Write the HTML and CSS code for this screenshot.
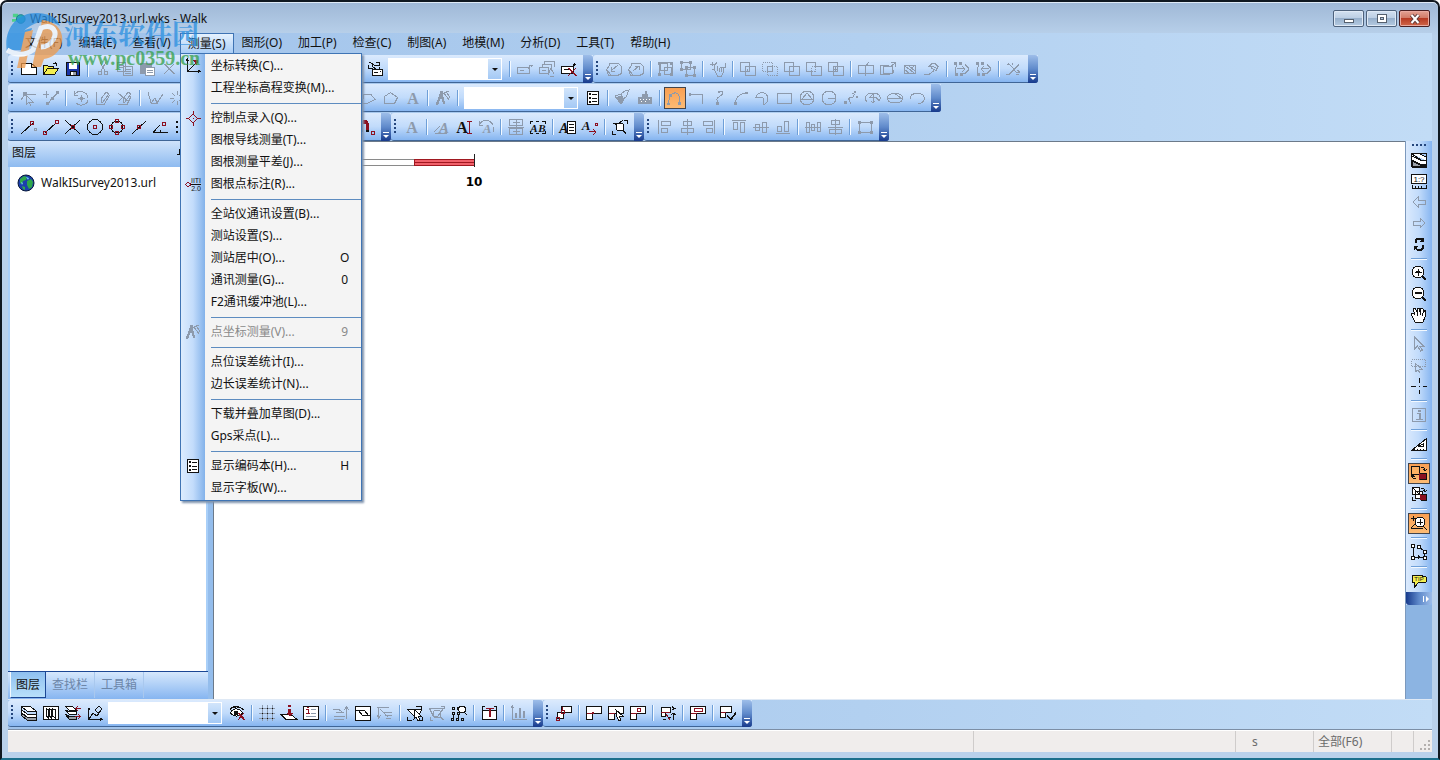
FILE: index.html
```html
<!DOCTYPE html>
<html lang="zh-CN">
<head>
<meta charset="utf-8">
<title>WalkISurvey2013.url.wks - Walk</title>
<link rel="stylesheet" href="styles.css">
</head>
<body>
<div class="window">
  <header class="titlebar">
    <svg class="app-icon" viewBox="0 0 16 16" aria-hidden="true"><path d="M1 2h6v4H1zM0 8h5v3H0z" fill="#4fd08a"/><circle cx="10" cy="8" r="5" fill="#27a9b8" stroke="#157987"/></svg>
    <h1 class="title">WalkISurvey2013.url.wks - Walk</h1>
    <div class="caption-buttons">
      <button class="cap" aria-label="最小化"><svg viewBox="0 0 16 12"><rect x="3.5" y="6.5" width="9" height="3" fill="#fff" stroke="#55606e"/></svg></button>
      <button class="cap" aria-label="最大化"><svg viewBox="0 0 16 12"><rect x="3.5" y="1.5" width="9" height="8" fill="#fff" stroke="#55606e"/><rect x="6.500" y="4.500" width="3" height="2" fill="#b5c8de" stroke="#55606e"/></svg></button>
      <button class="cap close" aria-label="关闭"><svg viewBox="0 0 16 12"><path d="M4.500 2l7 8M11.500 2l-7 8" stroke="#5b3a3a" stroke-width="4"/><path d="M4.500 2l7 8M11.500 2l-7 8" stroke="#fff" stroke-width="2"/></svg></button>
    </div>
  </header>

  <nav class="menubar">
    <button>文件(F)</button><button>编辑(E)</button><button>查看(V)</button>
    <div class="menu-host">
      <button class="open" aria-haspopup="menu" aria-expanded="true">测量(S)</button>
      <div class="popup" role="menu">
        <button role="menuitem"><i data-icon="axes"></i><span>坐标转换(C)...</span></button>
        <button role="menuitem"><i></i><span>工程坐标高程变换(M)...</span></button>
        <hr>
        <button role="menuitem"><i data-icon="ctrlpt"></i><span>控制点录入(Q)...</span></button>
        <button role="menuitem"><i></i><span>图根导线测量(T)...</span></button>
        <button role="menuitem"><i></i><span>图根测量平差(J)...</span></button>
        <button role="menuitem"><i data-icon="ptlabel"></i><span>图根点标注(R)...</span></button>
        <hr>
        <button role="menuitem"><i></i><span>全站仪通讯设置(B)...</span></button>
        <button role="menuitem"><i></i><span>测站设置(S)...</span></button>
        <button role="menuitem"><i></i><span>测站居中(O)...</span><kbd>O</kbd></button>
        <button role="menuitem"><i></i><span>通讯测量(G)...</span><kbd>0</kbd></button>
        <button role="menuitem"><i></i><span>F2通讯缓冲池(L)...</span></button>
        <hr>
        <button role="menuitem" disabled><i data-icon="compass"></i><span>点坐标测量(V)...</span><kbd>9</kbd></button>
        <hr>
        <button role="menuitem"><i></i><span>点位误差统计(I)...</span></button>
        <button role="menuitem"><i></i><span>边长误差统计(N)...</span></button>
        <hr>
        <button role="menuitem"><i></i><span>下载并叠加草图(D)...</span></button>
        <button role="menuitem"><i></i><span>Gps采点(L)...</span></button>
        <hr>
        <button role="menuitem"><i data-icon="codebook"></i><span>显示编码本(H)...</span><kbd>H</kbd></button>
        <button role="menuitem"><i></i><span>显示字板(W)...</span></button>
      </div>
    </div>
    <button>图形(O)</button><button>加工(P)</button><button>检查(C)</button><button>制图(A)</button><button>地模(M)</button><button>分析(D)</button><button>工具(T)</button><button>帮助(H)</button>
  </nav>

  <div class="toolrow">
    <div class="toolbar" data-items="new open save | cut copy paste delete | copy paste copy paste copy paste copy paste keys combo | tag tags tagdel"></div>
    <div class="toolbar" data-items="boxleft boxright | group ungroup | hands | union minus inter merge xor | split rotrect hatch hook | ptsright ptsleft | trim"></div>
  </div>
  <div class="toolrow">
    <div class="toolbar" data-items="nodesel nodeadd | rotate pen pencut | wave burst copy paste copy | paste copy paste | copy flag house textA | compass | combo codebook | brush building | arcpoly* corner scurve arc pie rect circtri circrad sdots ellarc ellipse earc"></div>
  </div>
  <div class="toolrow last">
    <div class="toolbar" data-items="snapend segment crossing center quadrant nearest angle dots copy paste | copy paste copy paste copy magnet"></div>
    <div class="toolbar" data-items="textA | texthand textsize textrot | textgrid textbox | textlist textarrow | textfind"></div>
    <div class="toolbar" data-items="alignl alignc alignr | alignt alignm alignb | disth distv | frame"></div>
  </div>

  <main class="work">
    <aside class="dock">
      <h2 class="dock-title"><span>图层</span><svg viewBox="0 0 10 10" aria-hidden="true"><path d="M3.500 1v5M6.500 1v5M1 6.500h8M5.500 7v3M3 1.500h4" fill="none" stroke="#111"/></svg></h2>
      <ul class="tree">
        <li><svg viewBox="0 0 18 18" aria-hidden="true"><circle cx="9" cy="9" r="8" fill="#1c3fae" stroke="#061838"/><path d="M3 5l4-3 3 1-1 3-3 1-1 3-2-1zM10 7l4-2 2 3-1 5-3 2-2-4zM5 12l3 1v3l-2-1z" fill="#2fa84a"/><path d="M9 3l3 1-1 2zM4 8l2 1-1 2z" fill="#6fd3ee"/></svg><span>WalkISurvey2013.url</span></li>
      </ul>
      <div class="tabs">
        <button class="on">图层</button><button>查找栏</button><button>工具箱</button>
      </div>
    </aside>
    <section class="canvas" aria-label="绘图区">
      <svg class="scale" width="300" height="50" shape-rendering="crispEdges" aria-label="比例尺">
        <path d="M20 17.500h180M20 23.500h180" stroke="#8a8a8a"/>
        <rect x="200" y="17" width="60" height="7" fill="#f0606a"/>
        <path d="M200 17.500h60M200 20.500h60M200 23.500h60M200.500 17v7" stroke="#a01820"/>
        <path d="M260.500 12v13" stroke="#222"/>
        <text x="260" y="44" text-anchor="middle">10</text>
      </svg>
    </section>
    <div class="side">
      <div class="vbar" data-items="layers scale1 prev next refresh | zoomin zoomout pan | pointer boxsel crosshair | info | setsquare | swap* swap2 | zoomcalc* | editpath | tip"></div>
    </div>
  </main>

  <div class="toolrow bottom">
    <div class="toolbar" data-items="stack pages stackx plot combo eyex | grid pin report | lift sheet drop | selpoly zoompoly tree | box3 | chart"></div>
    <div class="toolbar" data-items="link1 | link2 link3 link4 | link5 | link6 | link7"></div>
  </div>

  <footer class="status">
    <span class="p-msg"></span><span class="p-pos"></span><span class="p-unit">s</span><span class="p-all">全部(F6)</span><span class="p-flag"></span>
    <span class="p-grip"><svg width="12" height="12" fill="#b4b0ae" aria-hidden="true"><path d="M9 1h2v2H9zM9 5h2v2H9zM5 5h2v2H5zM9 9h2v2H9zM5 9h2v2H5zM1 9h2v2H1z"/></svg></span>
  </footer>

  <div class="watermark" aria-hidden="true">
    <svg viewBox="0 0 60 60">
      <path d="M3 42C-1 20 12 2 34 3c14 1 20 6 22 13C42 8 27 12 17 24c-5 7-7 12-9 18z" fill="#2a8fe0"/>
      <path d="M3 38c6-12 14-18 25-20l-5 22H4z" fill="#2a8fe0"/>
      <path d="M38 10c18 2 24 16 18 28-3 6-9 10-16 11l-3 8h-9l8-36z" fill="#f09a4a"/>
      <path d="M21 22l8-2-8 38h-8z" fill="#f09a4a"/>
      <path d="M3 40c10 6 19 5 26 0l8-22c12-5 17 4 12 12-3 5-7 7-12 7" fill="none" stroke="#fff" stroke-width="5"/>
    </svg>
    <div class="wm-text"><strong>河东软件园</strong><em>www.pc0359.cn</em></div>
  </div>
</div>
<script src="toolbars.js"></script>
</body>
</html>
```
FILE: styles.css
```css
* { box-sizing: border-box; }
body {
  margin: 0;
  font: 12px/16px "Noto Sans", "Noto Sans CJK SC", sans-serif;
  color: #111;
}
button { font: inherit; color: inherit; border: 0; background: none; padding: 0; margin: 0; }
h1, h2, ul { margin: 0; padding: 0; font: inherit; list-style: none; }

.window {
  position: relative;
  display: flex;
  flex-direction: column;
  height: 100vh;
  padding: 0 6px 6px;
  border: 2px solid #101820;
  border-bottom-color: #1b6f8c;
  border-radius: 7px 7px 0 0;
  background: linear-gradient(#9fb8d6, #b9d1eb 34px, #b9d1eb);
  box-shadow: inset 0 1px 0 #dfeaf6;
}

/* Title bar */
.titlebar { display: flex; align-items: center; height: 31px; padding: 2px 0 0 4px; }
.app-icon { width: 14px; height: 14px; margin-right: 4px; }
.title { flex: 1; }
.caption-buttons { display: flex; gap: 2px; padding-right: 2px; }
.cap {
  display: grid;
  place-items: center;
  width: 31px;
  height: 17px;
  border: 1px solid #4e627c;
  border-radius: 2px;
  background: linear-gradient(#d3e1f0, #bacde3 50%, #97b0cc 50%, #b5cbe2);
  box-shadow: inset 0 0 0 1px #dfe9f5;
}
.cap svg { width: 16px; height: 12px; }
.cap.close { border-color: #4a1f22; background: linear-gradient(#e3a294, #d07763 50%, #b73b24 50%, #d0674a); box-shadow: inset 0 0 0 1px #e9aaa0; }

/* Menu bar */
.menubar { display: flex; height: 22px; padding-left: 9px; background: linear-gradient(90deg, #a0c2ea, #b2d0f0 60%, #c2dcf6); }
.menubar > button, .menu-host > button { height: 20px; padding: 0 8px; }
.menu-host { position: relative; }
.menu-host > .open { margin-left: 1px; padding: 0 7px; border: 1px solid #3f74b4; border-bottom: 0; background: linear-gradient(#e6f2fe, #a9cdf6); }
.popup {
  position: absolute;
  z-index: 5;
  left: 1px;
  top: 20px;
  width: 182px;
  padding: 1px 0;
  border: 1px solid #3f74b4;
  background: linear-gradient(90deg, #dcecfe, #c3dcfb 12px, #83b2ea 24px, #f4f4f4 24px);
  box-shadow: 2px 2px 2px #7f93ad;
}
.popup button { display: flex; align-items: center; width: 100%; height: 22px; text-align: left; white-space: nowrap; }
.popup i { display: grid; place-items: center; width: 24px; margin-right: 6px; }
.popup span { flex: 1; }
.popup kbd { width: 24px; font: inherit; margin-right: 4px; text-align: center; }
.popup button:disabled { color: #8a8a8a; }
.popup hr { margin: 4px 0 3px 30px; border: 0; border-top: 1px solid #5d8cc0; }

/* Toolbars */
.toolrow { display: flex; height: 29px; padding-bottom: 1px; background: linear-gradient(90deg, #a0c2ea, #b2d0f0 60%, #c2dcf6); }
.toolrow.last { height: 28px; padding-bottom: 0; }
.toolbar {
  display: flex;
  align-items: flex-start;
  height: 28px;
  padding-top: 3px;
  border-bottom: 1px solid #3f6596;
  border-radius: 3px 0 3px 3px;
  background: linear-gradient(#dbeafd, #c1dbfb 50%, #86b5f0);
}
.grip { width: 10px; height: 16px; margin-top: 3px; background: repeating-linear-gradient(#24457c 0 2px, transparent 2px 4px) 3px 0 / 2px 14px no-repeat; }
.tool { display: grid; place-items: center; width: 22px; height: 22px; }
.tool svg, .popup svg { width: 16px; height: 16px; overflow: visible; shape-rendering: crispEdges; }
.tool.on { border: 1px solid #41454d; background: linear-gradient(#f99f52, #fcbb74); }
.sep { width: 8px; height: 16px; margin-top: 3px; background: linear-gradient(90deg, transparent 3px, #6e9fd8 3px, #6e9fd8 4px, #f3f9ff 4px, #f3f9ff 5px, transparent 5px); }
.more {
  display: grid;
  place-items: end center;
  align-self: stretch;
  width: 10px;
  margin: -3px 0 -1px 3px;
  padding-bottom: 2px;
  border-radius: 0 3px 3px 0;
  background: linear-gradient(#9dbde9, #5f8acb 50%, #173a8c);
}
.more svg { width: 8px; height: 8px; }
.combo { position: relative; width: 114px; height: 22px; margin: 0 4px 0 2px; }
.combo select { appearance: none; display: block; width: 100%; height: 100%; border: 1px solid #fff; border-radius: 0; background: linear-gradient(#d2e5fb, #a4c9f5) right / 13px 100% no-repeat #fff; }
.combo::after { content: ""; position: absolute; right: 4px; top: 10px; border: 3px solid transparent; border-top-color: #111; border-bottom: 0; }

/* Work area */
.work { flex: 1; display: flex; min-height: 0; background: #94bdec; }
.dock { display: flex; flex-direction: column; width: 200px; background: #a9cff8; }
.dock-title { display: flex; justify-content: space-between; height: 26px; padding: 4px 22px 4px 4px; background: linear-gradient(#cfe3fb, #8ebbf0); }
.dock-title svg { width: 10px; height: 10px; margin-top: 3px; }
.tree { flex: 1; margin: 0 2px; padding-top: 6px; background: #fff; }
.tree li { display: flex; align-items: center; gap: 6px; height: 20px; padding-left: 7px; }
.tree svg { width: 18px; height: 18px; }
.tabs { display: flex; height: 28px; padding: 0 0 1px 2px; border-top: 1px solid #1c4794; background: linear-gradient(#d6e8fd, #86b5f0); color: #6d86a8; }
.tabs button { padding: 0 6px; border-right: 1px solid #a9c8ee; }
.tabs .on { color: #111; border: 1px solid #1c4794; border-top: 0; border-left-color: #f3f9ff; padding: 0 5px; background: linear-gradient(#8fc0f0, #b8e0fa); }
.canvas { position: relative; flex: 1; margin-left: 5px; border: 1px solid #6c7a8a; border-width: 1px 0 0 1px; background: #fff; }
.scale { position: absolute; left: 0; top: 0; font: bold 12px "DejaVu Sans", sans-serif; }
.side { width: 27px; border-left: 1px solid #7c99bd; background: #8cb4e2; }
.vbar { display: flex; flex-direction: column; align-items: center; background: linear-gradient(90deg, #dbeafd, #c1dbfb 50%, #86b5f0); }
.vbar .grip { width: 16px; height: 9px; margin: 0; background: repeating-linear-gradient(90deg, #24457c 0 2px, transparent 2px 4px) 1px 3px / 14px 2px no-repeat; }
.vbar .tool { height: 21px; align-items: start; padding-top: 2px; }
.vbar .tool.on { padding-top: 1px; }
.vbar .sep { width: 16px; height: 8px; margin: 0; background: linear-gradient(transparent 3px, #6e9fd8 3px, #6e9fd8 4px, #f3f9ff 4px, #f3f9ff 5px, transparent 5px); }
.vbar .more { height: 13px; width: auto; margin: 0; padding: 0 2px 0 0; place-items: center end; border-radius: 0 0 3px 3px; background: linear-gradient(90deg, #173a8c, #5f8acb 50%, #9dbde9); }
.vbar .more svg { transform: rotate(-90deg); }

.bottom { height: 31px; padding-bottom: 2px; border-top: 1px solid #dfe9f5; border-bottom: 1px solid #7c8ea5; }
.bottom .toolbar { height: 27px; padding-top: 2px; }
.bottom .more { margin-top: -2px; }

/* Status bar */
.status { display: flex; height: 22px; border-top: 1px solid #fff; background: #f0edec; color: #6b6b6b; line-height: 21px; }
.status span { border-left: 1px solid #cfcccb; }
.status .p-msg { flex: 1; border: 0; }
.p-pos { width: 262px; }
.p-unit { width: 78px; padding-left: 16px; }
.p-all { width: 78px; padding-left: 4px; }
.p-flag { width: 22px; }
.status .p-grip { display: grid; place-items: end; width: 19px; padding: 1px; }

/* Watermark */
.watermark { position: absolute; z-index: 6; left: 2px; top: 6px; display: flex; opacity: .75; pointer-events: none; }
.watermark svg { width: 60px; height: 64px; }
.wm-text { display: flex; flex-direction: column; padding-top: 10px; }
.wm-text strong { font: bold 27px/30px "Noto Serif CJK SC", "Noto Sans CJK SC", sans-serif; color: #2a8fe0; }
.wm-text em { font: bold 20px/20px "Liberation Serif", serif; color: #35a04a; padding-left: 4px; }
```
FILE: toolbars.js
```javascript
// Pen styles, keyed by the first character of each icon layer.
const pens = {
  k: 'fill="none" stroke="#111"',
  K: 'fill="#111"',
  w: 'fill="#fff" stroke="#111"',
  g: 'fill="none" stroke="#8d9aac"',
  G: 'fill="#8d9aac"',
  d: 'fill="none" stroke="#8d9aac" stroke-dasharray="1 1"',
  r: 'fill="none" stroke="#8c1020"',
  R: 'fill="#8c1020"',
  y: 'fill="#f4ee50" stroke="#111"',
  b: 'fill="#1b35a8" stroke="#111"',
  s: 'fill="#9aa0a8" stroke="#111"',
  o: 'fill="#fcb064" stroke="#111"',
  W: 'fill="#fff"'
};

// Each icon is drawn on a 16 x 16 grid; layers are separated by "/".
// A layer starting with "t" is text: x,y,size,colour,style,characters.
const icons = {
  new: 'wM.5 2.500h10l5 4v7h-15z/kM10.500 2.500v4h5',
  open: 'yM.5 13.500v-9h4l1 1h5v2h5l-4 6z/kM.5 13.500l4-6h11M9.500 2.500h4v2M12 1l2 2',
  save: 'bM1.500 1.500h13v13h-13z/WM4 2h8v6H4z/sM5.500 10.500h6v4h-6z/WM6 11h2v3H6z',
  cut: 'gM5 1l5 9M11 1L6 10/gM3.500 10.500h3v3h-3zM9.500 10.500h3v3h-3z',
  copy: 'gM.5 1.500h8v9h-8zM6.500 5.500h9v9h-9zM2 4.500h5M2 6.500h4M8 8.500h6M8 10.500h6M8 12.500h6',
  paste: 'GM1 2h12v11H1z/WM7 7h8v7H7z/gM6.500 6.500h9v8h-9zM8 9.500h6M8 11.500h6',
  delete: 'gM3 3l10 10M13 3L3 13M4 3l10 10',
  keys: 'kM2.500 1.500l3 1v3l4 3M9 1.500h3v3h-4l-3-2M1.500 4v3h4/wM5.500 8.500h10v6h-10z/kM7 11.500h4M12.500 10.500h1M12 8V6',
  tag: 'gM.5 6.500h12v6h-12zM3 9.500h4M11 8l2-4h3M13 4l2 2',
  tags: 'gM.5 6.500h9v6h-9zM3.500 6V3.500h9V10M5.500 3V.5h10v5M3 9.500h4M9 14l3-7 3 6M11 15h4',
  tagdel: 'wM.5 5.500h12v7h-12z/kM3 8.500h5M12 5V3.500h3M13.500 2v3/rM7 7l8 8M15 7l-8 8M8 7l8 8',
  boxleft: 'gM.5 8.500l3-4v-2h9l3 3v7l-4 2h-9zM.5 8.500l5 6M12 4l-7 6M5 6v4h4',
  boxright: 'gM.5 8.500l3-4v-2h9l3 3v7l-4 2h-9zM.5 8.500l5 6M5 10l6-5M7 5h4v4',
  group: 'gM2.500 2.500h7v7h-7zM6.500 6.500h7v7h-7z/GM0 1h3v3H0zM12 1h3v3h-3zM0 12h3v3H0zM12 12h3v3h-3z/gM3 1.500h9M1.500 4v8M14.500 4v8',
  ungroup: 'gM1.500 1.500h9v7h-9zM6.500 6.500h8v8h-8z/GM0 0h3v3H0zM9 0h3v3H9zM0 7h3v3H0zM5 5h3v3H5zM13 5h3v3h-3zM5 13h3v3H5zM13 13h3v3h-3z',
  hands: 'gM0 3.500h5l2-2M15 2v4h-5M4.500 4v5l3 6h4l2-4V7M7.500 5v5M9.500 7v4M11.500 7v4M2 1v4M4 8l-2 1',
  union: 'gM.5 1.500h9v9h-9zM5.500 5.500h10v9h-10zM7.500 8v3M9 8v3',
  minus: 'gM5.500 5.500h5v5h-5z/dM.5 1.500h10v9h-10zM5.500 5.500h10v9h-10z',
  inter: 'gM.5 1.500h9v9h-9zM5.500 5.500h10v9h-10z',
  merge: 'gM.5 1.500h9v4h6v9h-10v-4h-5z/dM5.500 5.500h4v5h-4z',
  xor: 'gM.5 1.500h9v9h-9zM5.500 5.500h10v9h-10zM7.500 6v4M5 8.500h4',
  split: 'gM.5 4.500h15v8h-15zM11 1L7 6v9',
  rotrect: 'gM.5 13.500v-9h8M3.500 5.500h9v7h-9zM.5 13.500h9M11 1.500h4v4M15 2l-5 4M13 9v3',
  hatch: 'gM2.500 4.500h11v8h-11zM3 5l9 7M7 5l6 5M3 9l4 3M8 9l4-4',
  hook: 'gM0 13.500h5l5-4M3.500 5.500h5l5 2M8 2.500h3l3 3-2 4-4-2-2-3z',
  ptsright: 'gM2 2v4l-1 7M6 2l1 2M11 3.500l3 3v3l-3 3h-4M3 7.500h8M8 5l3 3-3 3/GM0 1h3v3H0zM5 1h3v3H5zM1 12h3v3H1zM6 12h3v3H6z',
  ptsleft: 'gM2 2v4l-1 7M6 2l1 2M11 3.500l3 3v3l-3 3h-4M5 7.500h8M8 5L5 8l3 3/GM0 1h3v3H0zM5 1h3v3H5zM1 12h3v3H1zM6 12h3v3H6z',
  trim: 'gM0 13.500h3l10-10M2 2l5 5 3 4h4M10 13l3 1M1 4l2-1M11 9l3 2M6 2l1 2',

  nodesel: 'gM0 10L4 4h11M5 5v10l3-3 2 4M6 6l6 6H8/GM2 2h4v4H2z',
  nodeadd: 'gM0 4.500h6M3.500 1v7M5 14l4-6 6-5/GM3 12h3v3H3zM8 7h3v3H8zM13 1h3v3h-3z',
  rotate: 'gM1 5c4-6 13-4 14 3s-8 9-12 5M1 1v4h4M5 8.500h7M8.500 5v7M7 7l3 3M10 7l-3 3',
  pen: 'gM1.500 2v12h8l5-9M6 13V9l5-7 3 2-6 8z',
  pencut: 'gM1 14.500h9l4-8M6 13V9l5-7 3 2-6 8zM1 3l11 9M2 11l4-4',
  wave: 'gM1 2l3 11 4-5 2 5 6-9M4 13h7',
  burst: 'gM3 3l3 3M8 1v4M13 3l-3 3M1 8h4M11 8h4M3 13l3-3M8 11v4M13 13l-3-3',
  flag: 'gM1 13.500h5l8-4-4-5H3z',
  house: 'gM1.500 13.500v-7l6-4 7 5-3 6z',
  textA: 't8,14,16,#8d9aac,bold,A',
  compass: 'gM6 2L1 15M6 2l4 12M3 9l6-1M9 3l5 7M11 1l4 7M7 4l7-3/GM5 1h3v4l2 9H8L6 7l-3 8H1l3-8z',
  codebook: 'wM2.500 1.500h11v13h-11z/KM4 3h2v2H4zM4 7h2v2H4zM4 11h2v2H4z/kM7 4.500h5M7 8.500h5M7 11.500h5',
  brush: 'gM0 6l6 8 3-4-3-6zM6 4l4-3 4-1-3 7-4 3/GM2 7l5-2 2 4-3 5z',
  building: 'GM1 7h14v7H1zM5 4h6v3H5zM8 1h2v3H8z/WM3 9h1v1H3zM6 9h1v1H6zM9 9h1v1H9zM12 9h1v1h-1zM4 11h1v1H4zM8 11h1v1H8z',
  arcpoly: 'gM1 14l2-8M5 4c5-3 8 0 8 9/GM2 4h3v3H2zM0 13h3v2H0zM11 12h3v3h-3z',
  corner: 'gM1 4.500h12.500v9/GM0 3h2v3H0z',
  scurve: 'gM8 1.500h3v3l-5 4c-1 3 3 2 0 6/GM5 12h3v3H5zM7 1h2v2H7z',
  arc: 'gM2 14C3 7 6 4 14 3/GM1 12h3v3H1zM12 2h3v2h-3z',
  pie: 'gM8.500 14.500a6 6 0 10-7.500-7h7z',
  rect: 'gM.5 3.500h14v10h-14z',
  circtri: 'gM8 1a7 7 0 100 14A7 7 0 008 1zM1 9.500h14M8 3L3 9h10z',
  circrad: 'gM8 1a7 7 0 100 14A7 7 0 008 1zM7 8.500h8',
  sdots: 'gM9 3.500c4-1 2 4-1 4s-2 4 0 6/GM1 11h3v3H1zM11 1h2v2h-2zM5 8h2v2H5zM13 6h2v2h-2z',
  ellarc: 'gM2 12C-2 7 2 3 8 3s9 4 6 8M8 4L4 8M8 4v9M4 7h7l3 4M6 11l2 2 2-2',
  ellipse: 'gM8 3c-4 0-7.500 2-7.500 5s3 5 7.500 5 7.500-2 7.500-5S12 3 8 3zM1 8.500h14M7 3l7 5',
  earc: 'gM1 9C0 2 15 1 15.500 8c0 3-2 5-6 6',

  snapend: 'kM0 15L12 4/rM9.500 2.500h3v3h-3z/gM13.500 9.500h2v2h-2z',
  segment: 'kM2 14L13 4/rM.5 12.500h3v3h-3zM12.500 1.500h3v3h-3z',
  crossing: 'kM0 1l15 14M15 1L0 15/rM6.500 6.500h3v3h-3z',
  center: 'kM8 .5a7.500 7.500 0 100 15 7.500 7.500 0 000-15z/rM6.500 6.500h3v3h-3z',
  quadrant: 'kM8 2a6 6 0 100 12A6 6 0 008 2z/rM6.500.5h3v3h-3zM6.500 12.500h3v3h-3zM.5 6.500h3v3h-3zM12.500 6.500h3v3h-3z',
  nearest: 'kM1 15L15 2/rM6.500 6.500h3v3h-3z',
  angle: 'kM0 13.500h15M0 13.500L7 6M7.500 11v2/rM9.500 3.500h3v3h-3z',
  dots: 'KM1 2h2v2H1zM1 7h2v2H1zM1 12h2v2H1z',
  magnet: 'RM1 13V5c2-6 9-5 9 1v6H7V7C7 4 4 4 4 6v7z/rM12.500 12.500h3v3h-3z/KM1 11h3v2H1zM7 11h3v2H7z',
  texthand: 't10,14,15,#8d9aac,italic,A/gM0 13l6-6M1 14.500h12',
  textsize: 't6,14,16,#111,bold,A/rM11 2.500h5M11 14.500h5M13.500 3v12',
  textrot: 't9,14,13,#8d9aac,italic,A/gM1 6C4 0 12 0 15 6M1 2v4h4M15 8v5',
  textgrid: 'gM1.500.5h13v6h-13zM1.500 9.500h13v6h-13zM5 3.500h7M5 12.500h7M8 1v14M0 8h16',
  textbox: 't4,13,11,#111,italic,A/t12,13,11,#111,italic,B/kM0 2.500h3M6 2.500h3M12 2.500h4M0 14.500h3M6 14.500h3M12 14.500h4M.5 3v2M15.500 3v2M.5 12v3M15.500 12v3',
  textlist: 't4,14,14,#111,italic,A/wM7.500 2.500h8v12h-8z/kM9 5.500h5M9 8.500h5M9 11.500h5',
  textarrow: 't4,11,13,#111,italic,A/rM7 12.500h6M11 10l3 3-3 3M13.500 4.500h2v2h-2z',
  textfind: 'kM12 1.500h3.500v3M.5 12v3.500h3M3 5h3l5-4/wM8 4a4 4 0 100 8 4 4 0 000-8z/kM11 11l3 4M1 4l4 1',
  alignl: 'gM1.500 1v14M4.500 2.500h9v4h-9zM4.500 9.500h6v4h-6z',
  alignc: 'gM8.500 0v16M2.500 9.500h12v4h-12zM4.500 2.500h8v4h-8z',
  alignr: 'gM13.500 1v14M2.500 2.500h9v4h-9zM5.500 9.500h6v4h-6z',
  alignt: 'gM1 1.500h14M2.500 3.500h4v7h-4zM9.500 3.500h4v10h-4z',
  alignm: 'gM0 8.500h16M2.500 5.500h4v6h-4zM9.500 3.500h4v10h-4z',
  alignb: 'gM1 14.500h14M2.500 7.500h4v5h-4zM9.500 2.500h4v10h-4z',
  disth: 'gM0 8.500h16M1.500 3.500h3v10h-3zM6.500 5.500h3v6h-3zM12.500 3.500h3v9h-3z',
  distv: 'gM8.500 0v16M4.500 1.500h8v4h-8zM2.500 10.500h12v4h-12zM1 8h15',
  frame: 'gM2.500 3.500h12v10h-12z/GM1 2h3v3H1zM13 2h3v3h-3zM1 12h3v3H1zM13 12h3v3h-3z',

  axes: 'kM2.500 1v12.500H15M3 13L12 4M1 3l1.500-2L4 3M13 12l2 1.500L13 15/RM8 2h5l-1 6z',
  ctrlpt: 'rM8 4l4.500 4.500L8 13 3.500 8.500zM8.500 1v3M8.500 13v3M1 8.500h3M13 8.500h3/RM8 8h1v1H8z',
  ptlabel: 'rM3 6l3 2.500L3 11 .5 8.500z/kM6 8.500h10/t11,7,7,#111,normal,IITI/t11,15,7,#111,normal,2.0',

  layers: 'wM.5 1.500h8l7 4v3h-5zM.5 1.500v13h15v-6/sM1 9l8 4h6v2H1z/WM2 5l8 4h5v2H9L2 7z/kM1 4l8 4h7M1 8l8 4h7M.5 1.500h15v13h-15z',
  scale1: 'wM.5 1.500h15v9h-15z/t8,9,8,#111,normal,1:?/kM1 11.500v4h14v-4M4.500 13v2M7.500 13v2M10.500 13v2',
  prev: 'gM2 8l5-5v3h7v4H7v3z',
  next: 'gM14 8L9 3v3H2v4h7v3z',
  refresh: 'kM4.500 7V4l2-2h4l2 2M12.500 9v3l-2 2h-4l-2-2M5.500 7V4.500l2-1.500h3M11.500 9v2.500L10 13H7/KM13 1v5H9zM3 15v-5h4z',
  zoomin: 'wM7 1a6 6 0 100 12A6 6 0 007 1z/kM12 11l3 4M11 12l3 3M4 7.500h7M7.500 4v7M5 6.500h4',
  zoomout: 'wM7 1a6 6 0 100 12A6 6 0 007 1z/kM12 11l3 4M11 12l3 3M4 7.500h7M4 6.500h7',
  pan: 'wM4 15l-3-6-1-2 2-1 2 2-2-6 2-1 2 4V1h2l1 4 1-4 2 1v4l2-3 1 1-1 6-2 5z/kM6 5v4M9 5v3M12 6l-1 3',
  pointer: 'gM3.500 1v12l3-3 3 5 2-1-3-4h4z',
  boxsel: 'gM4 6v9l3-2 2 3M5 7l6 5H8/dM.5 2.500h14v7h-14z',
  crosshair: 'kM8.500 0v5M8.500 12v4M0 8.500h5M12 8.500h4/KM8 8h1v1H8z',
  info: 'gM1.500 1.500h13v13h-13zM6 6.500h3v6M5 12.500h7/GM7 3h3v2H7zM8 7h2v5H8z',
  setsquare: 'wM.5 14.500h15v-12z/kM7.500 10.500h5v-3zM3 13v2M6 13v2M9 13v2M12 13v2',
  swap: 'oM.5 1.500h8v8h-8z/RM8 8h8v7H8z/kM8.500 8.500h7v6h-7M10 2c3 0 4 1 4 4M12 4l2 2 2-2M5 14c-3 0-4-1-4-3M0 12l1-2 3 2',
  swap2: 'wM1.500 1.500h7v7h-7zM4.500 5.500h7v7h-7z/RM9 8h6v6H9z/kM1 1l7 7M9.500 8.500h6v6h-6M10 2c3 0 4 1 4 4M1 11v3h4M12 4l2 2 2-2',
  zoomcalc: 'WM9 2a5 5 0 100 10A5 5 0 009 2z/kM9 2a5 5 0 100 10A5 5 0 009 2zM6 7.500h6M9.500 4v6M12 11l4 4M0 3.500h5M2.500 1v5M0 13.500h12M0 13l4-4',
  editpath: 'kM2 2v11h12M8 3l5 4v6/wM.5.5h3v3h-3zM6.500 1.500h3v3h-3zM12.500 6.500h3v3h-3zM.5 12.500h3v3h-3zM12.500 12.500h3v3h-3z/bM7 11l2 2-2 2z',
  tip: 'yM1 3l7-1 7 2v5l-8 1-4 5V9L1 9z/t8,8,6,#111,normal,TIP',

  stack: 'wM.5 1.500h9l6 5h-9z/kM.5 1.500v3l6 5h9v-3/wM.5 4.500l6 5h9v3h-9l-6-5z/sM.5 8.500l6 4h9v3h-9l-6-5z',
  pages: 'wM.5 1.500h15v13h-15z/kM3.500 4v7l2 2V5zM6.500 4v7l2 2V5zM9.500 4v7l3 2V5z',
  stackx: 'wM.5 1.500h7l4 4h-7z/wM.5 5.500l4 4h7v-3h-7z/sM.5 9.500l4 5h7v-3h-7z/rM11 3.500h5M13 1l-2 2.500L13 6M10 11.500h5M13 9l2 2.500L13 14',
  plot: 'kM1.500 3v11.500H15M1 5l1-2 1 2M13 13l2 1.500-2 1M2 14l4-6 4 3 4-6M8 5l4-4 3 3-4 4z',
  eyex: 'wM1 8c4-6 9-5 13 0-4 4-9 4-13 0z/KM5 6h4v4H5zM1 3c4-3 9-3 14 1l-1 1C9 1 5 2 1 5z/rM9 8l6 7M15 8l-6 7M10 8l6 7',
  grid: 'gM0 3.500h16M0 8.500h16M0 13.500h16M3.500 0v16M8.500 0v16M13.500 0v16/KM3 3h1v1H3zM8 3h1v1H8zM13 3h1v1h-1zM3 8h1v1H3zM8 8h1v1H8zM13 8h1v1h-1zM3 13h1v1H3zM8 13h1v1H8zM13 13h1v1h-1z',
  pin: 'wM0 9.500h10l6 5H5z/RM7 4h3v6H7zM5 8h7l-3 4zM7 0h3v2H7z',
  report: 'wM.5 1.500h15v13h-15z/rM3 4.500h2v4M3 8.500h4/gM8 4.500h5M8 8.500h5M3 11.500h10/RM4 2h2v1H4z',
  lift: 'gM0 4.500h6l4 3H3M1 11.500h11M13.500 14V3M11 5l2.500-3L16 5M1 14.500h10',
  sheet: 'wM.5 1.500h15v14h-15z/kM3.500 5.500h6l4 5h-6zM1 5.500h2M13 10.500h2',
  drop: 'gM0 2.500h12M1.500 3v9M0 10l1.500 3L4 10M3 4l8 8M6 7.500h9M8 10.500h7M9 13.500h5',
  selpoly: 'wM.5 4.500h14l-3 7h-4z/kM9 1.500h6M14.500 1v3M.5 12v3.500h4M11 15.500h4V12/wM8 5l6 6h-3l2 4-2 1-2-4-2 2z',
  zoompoly: 'gM.5 3.500h14l-6 8h-4zM8 5a4 4 0 100 8 4 4 0 000-8zM11 12l4 3M12 1h3v3M1 12v3h3',
  tree: 'kM1.500 2.500h2v2h-2zM6.500 2.500h1v2h-1zM1.500 7.500h2v2h-2zM6.500 7.500h2v2h-2zM.5 13.500h2v2h-2zM5.500 13.500h2v2h-2zM10.500 13.500h2v2h-2zM2.500 10v3M7.500 10v3/wM11 1a3 3 0 100 7 3 3 0 000-7z/kM13 7l3 3',
  box3: 'wM1.500 5.500h14v9h-14z/rM5 3.500h8M8.500 4v8M9.500 4v8/kM1 1.500h3M13 1.500h3M1.500 2v3M15.500 2v3',
  chart: 'gM1.500 1v13.500H16M4.500 13V8M5.500 13V8M8.500 13V3M9.500 13V3M12.500 13V6M13.500 13V6M0 3l1.500-2L3 3',
  link1: 'wM5.500 1.500h10v6h-10zM1.500 7.500h6v6h-6z/rM5.500 5.500h3v3h-3zM.5 12.500h3v3h-3zM6 2v4',
  link2: 'wM.5 1.500h15v7h-15zM.5 8.500h6v6h-6z/rM1 8.500h6/RM6 7h2v2H6z',
  link3: 'wM.5 1.500h15v7h-15zM.5 8.500h6v6h-6z/rM1 8.500h6/wM8 5l7 6h-4l2 4-2 1-2-4z',
  link4: 'wM.5 1.500h15v7h-15zM.5 8.500h6v6h-6z/rM7.500 3.500h3v3h-3zM1 8.500h6',
  link5: 'wM1.500 2.500h9v5h-9zM1.500 7.500h4v4h-4z/rM1 7.500h9M6 9l4 6/kM13 8v7M11 10l2-2 3 2M12 1l2 3M16 3l-4 2M3 14h3M8 12h3',
  link6: 'wM.5 1.500h15v7h-15zM.5 8.500h6v6h-6z/rM4.500 3.500h8v3h-8zM1 8.500h6',
  link7: 'wM.5 1.500h11v6h-11zM.5 7.500h5v5h-5z/rM1 7.500h5/kM7 10l4 4 5-7M7 11l4 4 5-7'
};

function drawIcon(name) {
  const layers = icons[name].split('/').map(layer => {
    const rest = layer.slice(1);
    if (layer[0] === 't') {
      const [x, y, size, colour, style, chars] = rest.split(',');
      const face = style === 'normal' ? 'font-style="normal"' : style === 'bold' ? 'font-weight="bold"' : 'font-style="italic" font-weight="bold"';
      const family = size > 9 ? 'Liberation Serif' : 'Liberation Sans';
      return `<text x="${x}" y="${y}" font-size="${size}" fill="${colour}" font-family="${family}" text-anchor="middle" ${face}>${chars}</text>`;
    }
    return `<path ${pens[layer[0]]} d="${rest}"/>`;
  });
  return `<svg viewBox="0 0 16 16" aria-hidden="true">${layers.join('')}</svg>`;
}

function drawItem(item) {
  if (item === '|') return '<span class="sep"></span>';
  if (item === 'combo') return '<label class="combo"><select aria-label="选择"></select></label>';
  const name = item.replace('*', '');
  return `<button class="tool${item.endsWith('*') ? ' on' : ''}" aria-label="${name}">${drawIcon(name)}</button>`;
}

const more = '<button class="more" aria-label="更多"><svg viewBox="0 0 8 8"><path d="M1 1h6v1H1z" fill="#fff"/><path d="M1 4h6L4 7z" fill="#fff"/></svg></button>';
document.querySelectorAll('[data-items]').forEach(bar => {
  bar.innerHTML = '<span class="grip"></span>' + bar.dataset.items.split(' ').map(drawItem).join('') + more;
});
document.querySelectorAll('[data-icon]').forEach(slot => { slot.innerHTML = drawIcon(slot.dataset.icon); });
```
